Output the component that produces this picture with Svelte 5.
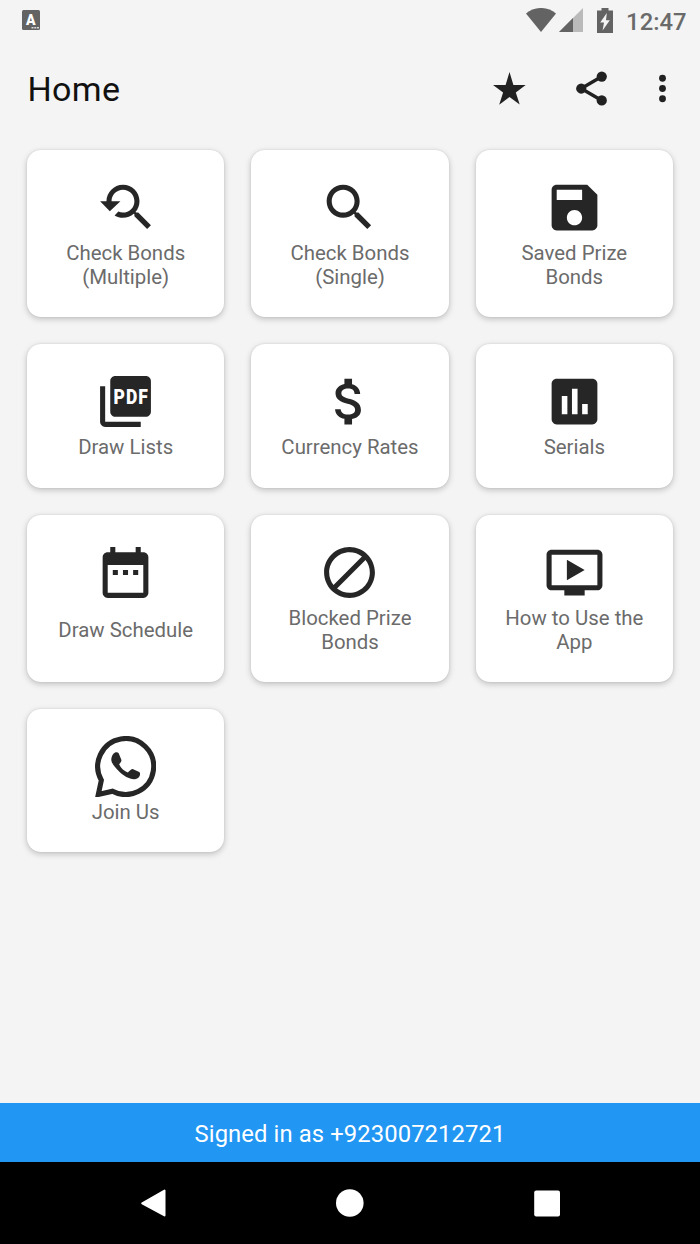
<svelte:head>
  <title>Home</title>
</svelte:head>

<script>
  const tiles = [
    {
      label: 'Check Bonds (Multiple)',
      icon: 'M17.01 14h-.8l-.27-.27c.98-1.14 1.57-2.61 1.57-4.23 0-3.59-2.91-6.5-6.5-6.5s-6.5 3-6.5 6.5H2l3.84 4 4.16-4H6.51C6.51 7 8.53 5 11.01 5s4.5 2.01 4.5 4.5c0 2.48-2.02 4.5-4.5 4.5-.65 0-1.26-.14-1.82-.38L7.71 15.1c.97.57 2.09.9 3.3.9 1.61 0 3.08-.59 4.22-1.57l.27.27v.79l5.01 4.99L22 19l-4.99-5z'
    },
    {
      label: 'Check Bonds (Single)',
      icon: 'M15.5 14h-.79l-.28-.27C15.41 12.59 16 11.11 16 9.5 16 5.91 13.09 3 9.5 3S3 5.91 3 9.5 5.91 16 9.5 16c1.61 0 3.09-.59 4.23-1.57l.27.28v.79l5 4.99L20.49 19l-4.99-5zm-6 0C7.01 14 5 11.99 5 9.5S7.01 5 9.5 5 14 7.01 14 9.5 11.99 14 9.5 14z'
    },
    {
      label: 'Saved Prize Bonds',
      icon: 'M17 3H5c-1.11 0-2 .9-2 2v14c0 1.1.89 2 2 2h14c1.1 0 2-.9 2-2V7l-4-4zm-5 16c-1.66 0-3-1.34-3-3s1.34-3 3-3 3 1.34 3 3-1.34 3-3 3zm3-10H5V5h10v4z'
    },
    {
      label: 'Draw Lists',
      icon: 'M20 2H8c-1.1 0-2 .9-2 2v12c0 1.1.9 2 2 2h12c1.1 0 2-.9 2-2V4c0-1.1-.9-2-2-2zM4 6H2v14c0 1.1.9 2 2 2h14v-2H4V6z',
      badge: 'PDF'
    },
    {
      label: 'Currency Rates',
      icon: 'M11.8 10.9c-2.27-.59-3-1.2-3-2.15 0-1.09 1.01-1.85 2.7-1.85 1.78 0 2.44.85 2.5 2.1h2.21c-.07-1.72-1.12-3.3-3.21-3.81V3h-3v2.16c-1.94.42-3.5 1.68-3.5 3.61 0 2.31 1.91 3.46 4.7 4.13 2.5.6 3 1.48 3 2.41 0 .69-.49 1.79-2.7 1.79-2.06 0-2.87-.92-2.98-2.1h-2.2c.12 2.19 1.76 3.42 3.68 3.83V21h3v-2.15c1.95-.37 3.5-1.5 3.5-3.55 0-2.84-2.43-3.81-4.7-4.4z'
    },
    {
      label: 'Serials',
      icon: 'M19 3H5c-1.1 0-2 .9-2 2v14c0 1.1.9 2 2 2h14c1.1 0 2-.9 2-2V5c0-1.1-.9-2-2-2zM9.2 17H7V9.8h2.2V17zm4 0H11V7h2.2v10zm4 0H15v-4h2.2v4z'
    },
    {
      label: 'Draw Schedule',
      icon: 'M9 11H7v2h2v-2zm4 0h-2v2h2v-2zm4 0h-2v2h2v-2zm2-7h-1V2h-2v2H8V2H6v2H5c-1.11 0-1.99.9-1.99 2L3 20c0 1.1.89 2 2 2h14c1.1 0 2-.9 2-2V6c0-1.1-.9-2-2-2zm0 16H5V9h14v11z'
    },
    {
      label: 'Blocked Prize Bonds',
      icon: 'M12 2C6.5 2 2 6.5 2 12s4.5 10 10 10 10-4.5 10-10S17.5 2 12 2zM4 12c0-4.4 3.6-8 8-8 1.8 0 3.5.6 4.9 1.7L5.7 16.9C4.6 15.5 4 13.8 4 12zm8 8c-1.8 0-3.5-.6-4.9-1.7L18.3 7.1C19.4 8.5 20 10.2 20 12c0 4.4-3.6 8-8 8z'
    },
    {
      label: 'How to Use the App',
      icon: 'M21 3H3c-1.11 0-2 .89-2 2v12c0 1.1.89 2 2 2h5v2h8v-2h5c1.1 0 1.99-.9 1.99-2L23 5c0-1.11-.9-2-2-2zm0 14H3V5h18v12zm-5-6l-7 4V7z'
    },
    {
      label: 'Join Us',
      outline: 'M2.5 17.4A11 11 0 1 1 6.9 21.7L1.3 23z',
      icon: 'M7.9 6.5C8.6 6.3 9.2 6.5 9.4 7L10.4 9.4C10.5 9.9 9.9 10.6 9.5 11.1 10.2 12.6 11.3 13.7 12.9 14.4 13.5 14 14.1 12.9 14.8 13L17.4 14.2C17.8 14.4 17.8 15 17.6 15.6 17.3 16.5 16.3 16.9 15.5 17 13.6 17.1 11.2 15.7 9.6 14.1 7.9 12.4 6.4 10.7 6.4 9.1 6.5 7.9 7.1 6.8 7.9 6.5z'
    }
  ];

  const phone = '+923007212721';
</script>

<div class="screen">
  <div class="status">
    <svg class="keyboard" width="18" height="20" viewBox="0 0 18 20">
      <rect width="18" height="20" rx="1.5" fill="#636363" />
      <text x="8.8" y="14.8" text-anchor="middle">A</text>
      <path d="M9.5 17h2v1.6h-2zM12.3 17h2v1.6h-2zM15 17h2v1.6h-2z" fill="#d8d8d8" />
    </svg>
    <div class="system">
      <svg width="30" height="24" viewBox="0 0 30 24">
        <path d="M0 5.6C8.5-1.9 21.5-1.9 30 5.6L15 24z" />
      </svg>
      <svg class="signal" width="24" height="24" viewBox="0 0 24 24">
        <path d="M24 0v24H0z" fill="#bababa" />
        <path d="M14 10v14H0z" />
      </svg>
      <svg class="battery" width="16" height="25" viewBox="0 0 16 25">
        <path d="M4.5 0h7v2.5H16V25H0V2.5h4.5z" />
        <path d="M9.8 5L3.2 14.4H7L5.6 22.5l7.2-10.3H9z" fill="#f4f4f4" />
      </svg>
      <span class="clock">12:47</span>
    </div>
  </div>

  <header>
    <h1>Home</h1>
    <button class="star" aria-label="Rate">
      <svg width="41" height="41" viewBox="0 0 41 41">
        <path d="M20.5 4l3.9 13h12.3l-9.9 7.6 3.9 12-10.2-7.7-10.3 7.8 3.9-12.1L4 17h12.6z" />
      </svg>
    </button>
    <button class="share" aria-label="Share">
      <svg width="41" height="41" viewBox="0 0 24 24">
        <path d="M18 5L6 12l12 7" fill="none" stroke="#212121" stroke-width="2" />
        <circle cx="18" cy="5" r="3" />
        <circle cx="6" cy="12" r="3" />
        <circle cx="18" cy="19" r="3" />
      </svg>
    </button>
    <button aria-label="More options">
      <svg width="41" height="41" viewBox="0 0 24 24">
        <circle cx="12" cy="6" r="2" />
        <circle cx="12" cy="12" r="2" />
        <circle cx="12" cy="18" r="2" />
      </svg>
    </button>
  </header>

  <main>
    {#each tiles as tile}
      <button class="tile">
        <svg width="61" height="61" viewBox="0 0 24 24">
          {#if tile.outline}
            <path d={tile.outline} class="outline" />
          {/if}
          <path d={tile.icon} />
          {#if tile.badge}
            <text class="badge" transform="translate(7.3 12.9) scale(0.84 1)">{tile.badge}</text>
          {/if}
        </svg>
        <span class="label">{tile.label}</span>
      </button>
    {/each}
  </main>

  <div class="account">Signed in as {phone}</div>

  <nav>
    <button aria-label="Back">
      <svg width="28" height="28" viewBox="0 0 28 28">
        <path d="M3.2 14.3L25.5 1.6V26.4z" stroke="#fff" stroke-width="2" stroke-linejoin="round" />
      </svg>
    </button>
    <button aria-label="Home">
      <svg width="28" height="28" viewBox="0 0 28 28">
        <circle cx="13.8" cy="14" r="13.8" />
      </svg>
    </button>
    <button aria-label="Recent apps">
      <svg width="28" height="28" viewBox="0 0 28 28">
        <rect x="1.2" y="1.4" width="25.8" height="26.2" rx="2" />
      </svg>
    </button>
  </nav>
</div>

<style>
  :global(body) {
    margin: 0;
    background: #f4f4f4;
  }

  .screen {
    display: flex;
    flex-direction: column;
    width: 700px;
    height: 1244px;
    background: #f4f4f4;
    font-family: Roboto, sans-serif;
  }

  svg {
    display: block;
    flex: none;
  }

  button {
    padding: 0;
    border: 0;
    background: none;
    font: inherit;
    cursor: pointer;
  }

  .status {
    display: flex;
    justify-content: space-between;
    box-sizing: border-box;
    height: 41px;
    padding: 8px 13.5px 0 22px;
    fill: #636363;
  }

  .keyboard {
    margin-top: 2px;
  }

  .keyboard text {
    font-size: 14px;
    font-weight: 900;
    fill: #fff;
  }

  .system {
    display: flex;
    align-items: flex-start;
  }

  .signal {
    margin-left: 3px;
  }

  .battery {
    margin-left: 14px;
  }

  .clock {
    margin-left: 13px;
    font-size: 23.8px;
    font-weight: 500;
    line-height: 28px;
    color: #6a6a6a;
  }

  header {
    display: flex;
    align-items: center;
    height: 95px;
    padding: 0 17px 0 27.5px;
    fill: #212121;
  }

  h1 {
    flex: 1;
    margin: 1px 0 0;
    font-size: 34px;
    font-weight: 400;
    letter-spacing: 0.35px;
    color: #111;
  }

  .star {
    margin-right: 41px;
  }

  .share {
    margin-right: 30px;
  }

  main {
    display: grid;
    grid-template-columns: repeat(3, 1fr);
    align-content: start;
    gap: 27px;
    flex: 1;
    padding: 13.9px 27px 0;
  }

  .tile {
    display: flex;
    flex-direction: column;
    align-items: center;
    box-sizing: border-box;
    padding: 27px 20px;
    border-radius: 14px;
    background: #fff;
    box-shadow: 0 2px 6px rgba(0, 0, 0, 0.22), 0 0 2px rgba(0, 0, 0, 0.1);
    fill: #262626;
  }

  .outline {
    fill: none;
    stroke: #262626;
    stroke-width: 2;
  }

  .badge {
    font-size: 8.2px;
    font-weight: 900;
    letter-spacing: 0.45px;
    fill: #fff;
  }

  .label {
    display: flex;
    flex: 1;
    align-items: center;
    padding: 3px 0 1.4px;
    font-size: 20.4px;
    line-height: 24px;
    text-align: center;
    color: #6b6b6b;
  }

  .account {
    height: 59px;
    background: #2196f3;
    font-size: 23.8px;
    line-height: 62px;
    letter-spacing: 0.1px;
    text-align: center;
    color: #fff;
  }

  nav {
    display: flex;
    justify-content: space-between;
    align-items: center;
    height: 82px;
    padding: 0 139px;
    background: #000;
    fill: #fff;
  }
</style>
